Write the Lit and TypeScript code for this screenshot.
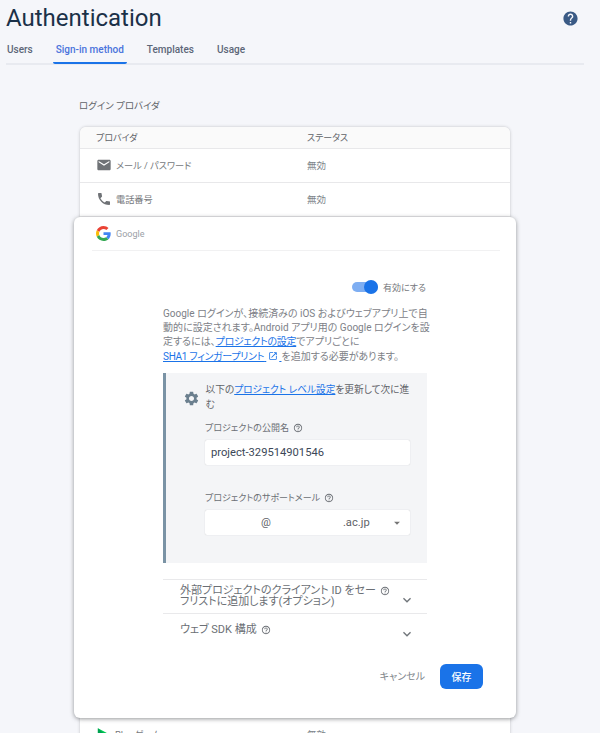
import { LitElement, html, css, svg } from "lit";
import { customElement } from "lit/decorators.js";

const ICONS: Record<string, string> = {
  mail: "M20 4H4c-1.1 0-2 .9-2 2v12c0 1.1.9 2 2 2h16c1.1 0 2-.9 2-2V6c0-1.1-.9-2-2-2zm0 4l-8 5-8-5V6l8 5 8-5v2z",
  phone:
    "M6.62 10.79c1.44 2.83 3.76 5.14 6.59 6.59l2.2-2.2c.27-.27.67-.36 1.02-.24 1.12.37 2.33.57 3.57.57.55 0 1 .45 1 1V20c0 .55-.45 1-1 1-9.39 0-17-7.61-17-17 0-.55.45-1 1-1h3.5c.55 0 1 .45 1 1 0 1.25.2 2.45.57 3.57.11.35.03.74-.25 1.02l-2.2 2.2z",
  settings:
    "M19.14 12.94c.04-.3.06-.61.06-.94 0-.32-.02-.64-.07-.94l2.03-1.58c.18-.14.23-.41.12-.61l-1.92-3.32c-.12-.22-.37-.29-.59-.22l-2.39.96c-.5-.38-1.03-.7-1.62-.94l-.36-2.54c-.04-.24-.24-.41-.48-.41h-3.84c-.24 0-.43.17-.47.41l-.36 2.54c-.59.24-1.13.57-1.62.94l-2.39-.96c-.22-.08-.47 0-.59.22L2.74 8.87c-.12.21-.08.47.12.61l2.03 1.58c-.05.3-.09.63-.09.94s.02.64.07.94l-2.03 1.58c-.18.14-.23.41-.12.61l1.92 3.32c.12.22.37.29.59.22l2.39-.96c.5.38 1.03.7 1.62.94l.36 2.54c.05.24.24.41.48.41h3.84c.24 0 .44-.17.47-.41l.36-2.54c.59-.24 1.13-.56 1.62-.94l2.39.96c.22.08.47 0 .59-.22l1.92-3.32c.12-.22.07-.47-.12-.61l-2.01-1.58zM12 15.6c-1.98 0-3.6-1.62-3.6-3.6s1.62-3.6 3.6-3.6 3.6 1.62 3.6 3.6-1.62 3.6-3.6 3.6z",
  help: "M12 2C6.48 2 2 6.48 2 12s4.48 10 10 10 10-4.48 10-10S17.52 2 12 2zm1 17h-2v-2h2v2zm2.07-7.75l-.9.92C13.45 12.9 13 13.5 13 15h-2v-.5c0-1.1.45-2.1 1.17-2.83l1.24-1.26c.37-.36.59-.86.59-1.41 0-1.1-.9-2-2-2s-2 .9-2 2H8c0-2.21 1.79-4 4-4s4 1.79 4 4c0 .88-.36 1.68-.93 2.25z",
  helpOutline:
    "M11 18h2v-2h-2v2zm1-16C6.48 2 2 6.48 2 12s4.48 10 10 10 10-4.48 10-10S17.52 2 12 2zm0 18c-4.41 0-8-3.59-8-8s3.59-8 8-8 8 3.59 8 8-3.59 8-8 8zm0-14c-2.21 0-4 1.79-4 4h2c0-1.1.9-2 2-2s2 .9 2 2c0 2-3 1.75-3 5h2c0-2.25 3-2.5 3-5 0-2.21-1.79-4-4-4z",
  expand: "M16.59 8.59L12 13.17 7.41 8.59 6 10l6 6 6-6z",
  open: "M19 19H5V5h7V3H5c-1.11 0-2 .9-2 2v14c0 1.1.89 2 2 2h14c1.1 0 2-.9 2-2v-7h-2v7zM14 3v2h3.59l-9.83 9.83 1.41 1.41L19 6.41V10h2V3h-7z",
  arrow: "M7 10l5 5 5-5z",
};

const icon = (name: string, size: number, color: string) => html`
  <svg class="icon" width=${size} height=${size} viewBox="0 0 24 24" fill=${color}>
    ${svg`<path d=${ICONS[name]}></path>`}
  </svg>
`;

const googleLogo = html`
  <svg class="icon" width="15" height="15" viewBox="0 0 48 48">
    <path fill="#EA4335" d="M24 9.5c3.54 0 6.71 1.22 9.21 3.6l6.85-6.85C35.9 2.38 30.47 0 24 0 14.62 0 6.51 5.38 2.56 13.22l7.98 6.19C12.43 13.72 17.74 9.5 24 9.5z"></path>
    <path fill="#4285F4" d="M46.98 24.55c0-1.57-.15-3.09-.38-4.55H24v9.02h12.94c-.58 2.96-2.26 5.48-4.78 7.18l7.73 6c4.51-4.18 7.09-10.36 7.09-17.65z"></path>
    <path fill="#FBBC05" d="M10.53 28.59c-.48-1.45-.76-2.99-.76-4.59s.27-3.14.76-4.59l-7.98-6.19C.92 16.46 0 20.12 0 24c0 3.88.92 7.54 2.56 10.78l7.97-6.19z"></path>
    <path fill="#34A853" d="M24 48c6.48 0 11.93-2.13 15.89-5.81l-7.73-6c-2.15 1.45-4.92 2.3-8.16 2.3-6.26 0-11.57-4.22-13.47-9.91l-7.98 6.19C6.51 42.62 14.62 48 24 48z"></path>
  </svg>
`;

const playLogo = html`
  <svg class="icon" width="15" height="15" viewBox="0 0 24 24">
    <path fill="#00c853" d="M3 2v20l19-10z"></path>
    <path fill="#00a152" d="M3 2l11 10-11 10z"></path>
  </svg>
`;

@customElement("app-root")
export class AppRoot extends LitElement {
  static styles = css`
    :host {
      display: block;
      width: 600px;
      height: 733px;
      overflow: hidden;
      background: #f5f6fa;
      font-family: Roboto, "Noto Sans CJK JP", sans-serif;
      font-feature-settings: "palt";
      color: #5f6368;
    }
    .icon {
      display: block;
      flex: none;
    }
    .page-head {
      display: flex;
      justify-content: space-between;
      padding: 5px 21px 0 6px;
    }
    h1 {
      margin: 0;
      font-size: 24px;
      line-height: 27px;
      font-weight: 400;
      color: #1b3148;
    }
    .page-head .icon {
      margin-top: 5px;
    }
    .tabs {
      display: flex;
      margin: 10px 16px 0 6px;
      border-bottom: 2px solid #e8eaf0;
      height: 21px;
    }
    .tab {
      padding: 0 3px;
      margin-right: 17px;
      font-size: 10px;
      font-weight: 500;
      line-height: 16px;
      color: #5c6678;
      height: 21px;
    }
    .tab.first {
      padding-left: 1px;
    }
    .tab.active {
      color: #4a73dc;
      height: 20px;
      border-bottom: 2px solid #1a73e8;
      border-radius: 0 0 2px 2px;
    }
    main {
      padding: 34px 90px 0 80px;
    }
    h2 {
      margin: 0 0 14px -1px;
      font-size: 9.5px;
      line-height: 14px;
      font-weight: 400;
      color: #5f6368;
    }
    .table {
      background: #fff;
      border-radius: 6px 6px 0 0;
      box-shadow: 0 0 3px rgba(60, 64, 67, 0.3);
    }
    .row {
      display: grid;
      grid-template-columns: 211px 1fr;
      align-items: center;
      height: 32px;
      padding: 0 0 1px 16px;
      font-size: 9.2px;
      border-bottom: 1px solid #e8e8ea;
    }
    .row.head {
      height: 20px;
      padding-bottom: 1px;
      background: #fafafa;
      border-radius: 6px 6px 0 0;
      font-size: 9px;
      color: #5f6368;
    }
    .provider {
      display: flex;
      align-items: center;
      gap: 4px;
    }
    .provider .name {
      color: #75787c;
    }
    .status {
      color: #80868b;
      font-size: 9.5px;
    }
    .row.head .status {
      color: #5f6368;
      font-size: 9px;
    }
    .dialog {
      margin: 0 -6px;
      position: relative;
      background: #fff;
      border-radius: 6px;
      box-shadow: 0 1px 4px rgba(60, 64, 67, 0.55);
      height: 501px;
      box-sizing: border-box;
      padding: 0 16px 0 18px;
    }
    .dialog-head {
      display: flex;
      align-items: center;
      gap: 5px;
      height: 33px;
      border-bottom: 1px solid #f1f1f2;
      padding-left: 4px;
      font-size: 9px;
      color: #9aa0a6;
    }
    .body {
      width: 264px;
      margin-left: 71px;
    }
    .toggle-row {
      display: flex;
      justify-content: flex-end;
      align-items: center;
      gap: 5px;
      height: 16px;
      margin-top: 28px;
      padding-right: 1px;
      font-size: 9px;
      color: #75787c;
    }
    .switch {
      display: flex;
      align-items: center;
      width: 26px;
      height: 10px;
      border-radius: 5px;
      background: #7eaef2;
      justify-content: flex-end;
    }
    .switch i {
      display: block;
      width: 14px;
      height: 14px;
      border-radius: 50%;
      background: #1a73e8;
    }
    .intro {
      margin: 12px 0 0;
      font-size: 10px;
      line-height: 14.2px;
      color: #7d8187;
      white-space: nowrap;
    }
    a {
      color: #1a73e8;
      text-decoration: underline;
    }
    .intro a {
      letter-spacing: -0.3px;
    }
    .intro a .icon {
      display: inline-block;
      vertical-align: -1px;
      margin: 0 1px 0 2px;
    }
    .notice {
      margin-top: 9.5px;
      height: 190px;
      box-sizing: border-box;
      background: #f4f5f7;
      border-left: 3px solid #7a93a5;
      padding: 9px 17px 0 18px;
    }
    .notice-title {
      display: flex;
      gap: 6px;
      align-items: flex-start;
      font-size: 9.7px;
      line-height: 15px;
      color: #5f6368;
      white-space: nowrap;
    }
    .notice-title .icon {
      margin: 8px 0 0 -1.5px;
    }
    .field {
      margin-left: 21px;
      margin-top: 10px;
    }
    .field + .field {
      margin-top: 27px;
    }
    .field label {
      display: flex;
      align-items: center;
      gap: 4px;
      font-size: 9px;
      line-height: 12px;
      color: #6b6f75;
    }
    .input {
      display: flex;
      align-items: center;
      justify-content: space-between;
      height: 25px;
      margin-top: 6px;
      background: #fff;
      border-radius: 2px;
      box-shadow: 0 0 1px rgba(60, 64, 67, 0.3);
      padding: 0 6px;
      font-size: 11.2px;
      color: #3c4858;
    }
    .mail .at {
      margin-left: 50px;
      font-size: 11px;
      color: #5f6368;
    }
    .mail .domain {
      margin-left: 72px;
      font-size: 11.2px;
      color: #5f6368;
    }
    .mail .text {
      display: flex;
    }
    .accordion {
      display: flex;
      justify-content: space-between;
      align-items: center;
      box-sizing: border-box;
      height: 34px;
      border-top: 1px solid #e9e9eb;
      padding: 0 12px 2px 17px;
      font-size: 11px;
      line-height: 11px;
      color: #6b6f75;
      white-space: nowrap;
    }
    .accordion.first {
      margin-top: 16px;
    }
    .accordion > .icon {
      margin-top: 8px;
    }
    .inline {
      display: inline-block;
      vertical-align: -2px;
      margin-left: 4px;
    }
    .actions {
      display: flex;
      justify-content: flex-end;
      align-items: center;
      gap: 15px;
      margin: 17px 17px 0 0;
      font-size: 10px;
      color: #80868b;
    }
    .actions .cancel {
      padding-bottom: 2px;
    }
    .save {
      width: 43px;
      height: 25px;
      border-radius: 6px;
      background: #1a73e8;
      color: #fff;
      display: flex;
      align-items: center;
      justify-content: center;
      font-size: 10px;
      font-weight: 500;
    }
  `;

  render() {
    return html`
      <div class="page-head">
        <h1>Authentication</h1>
        ${icon("help", 17, "#3a5a85")}
      </div>
      <nav class="tabs">
        <div class="tab first">Users</div>
        <div class="tab active">Sign-in method</div>
        <div class="tab">Templates</div>
        <div class="tab">Usage</div>
      </nav>
      <main>
        <h2>ログイン プロバイダ</h2>
        <div class="table">
          <div class="row head">
            <div>プロバイダ</div>
            <div class="status">ステータス</div>
          </div>
          <div class="row">
            <div class="provider">${icon("mail", 16, "#6f7276")}<span class="name">メール / パスワード</span></div>
            <div class="status">無効</div>
          </div>
          <div class="row">
            <div class="provider">${icon("phone", 16, "#6f7276")}<span class="name">電話番号</span></div>
            <div class="status">無効</div>
          </div>
          <section class="dialog">
            <div class="dialog-head">${googleLogo}<span>Google</span></div>
            <div class="body">
              <div class="toggle-row">
                <div class="switch"><i></i></div>
                <span>有効にする</span>
              </div>
              <p class="intro">
                Google ログインが、接続済みの iOS およびウェブアプリ上で自<br />
                動的に設定されます。Android アプリ用の Google ログインを設<br />
                定するには、<a>プロジェクトの設定</a>でアプリごとに<br />
                <a>SHA1 フィンガープリント${icon("open", 10, "#1a73e8")}</a>を追加する必要があります。
              </p>
              <div class="notice">
                <div class="notice-title">
                  ${icon("settings", 17, "#6b7f8e")}
                  <span>以下の<a>プロジェクト レベル設定</a>を更新して次に進<br />む</span>
                </div>
                <div class="field">
                  <label>プロジェクトの公開名 ${icon("helpOutline", 10, "#6b6f75")}</label>
                  <div class="input">project-329514901546</div>
                </div>
                <div class="field">
                  <label>プロジェクトのサポートメール ${icon("helpOutline", 10, "#6b6f75")}</label>
                  <div class="input mail">
                    <span class="text"><span class="at">@</span><span class="domain">.ac.jp</span></span>
                    ${icon("arrow", 14, "#757575")}
                  </div>
                </div>
              </div>
              <div class="accordion first">
                <span>外部プロジェクトのクライアント ID をセー<span class="inline">${icon("helpOutline", 10, "#6b6f75")}</span><br />フリストに追加します(オプション)</span>
                ${icon("expand", 16, "#70757a")}
              </div>
              <div class="accordion">
                <span>ウェブ SDK 構成<span class="inline">${icon("helpOutline", 10, "#6b6f75")}</span></span>
                ${icon("expand", 16, "#70757a")}
              </div>
            </div>
            <div class="actions">
              <span class="cancel">キャンセル</span>
              <div class="save">保存</div>
            </div>
          </section>
          <div class="row">
            <div class="provider">${playLogo}<span class="name">Play ゲーム</span></div>
            <div class="status">無効</div>
          </div>
        </div>
      </main>
    `;
  }
}
